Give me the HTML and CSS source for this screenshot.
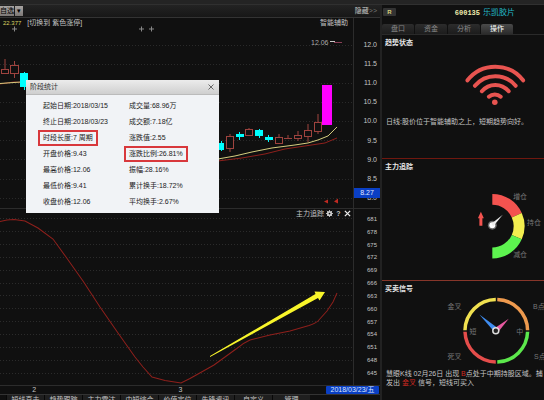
FILE: index.html
```
<!DOCTYPE html>
<html lang="zh-CN">
<head>
    <meta charset="UTF-8">
    <meta name="viewport" content="width=device-width, initial-scale=1.0">
    <title>乐凯胶片 600135</title>
    <link rel="stylesheet" href="styles.css">
</head>
<body>

<div class="topbar"></div>
<div class="main">
    <div class="chart-area">
        <div class="toolbar">
            <button class="tool">自选</button>
            <button class="tool arrow" aria-label="更多">▾</button>
            <button class="hide-btn">隐藏<span>&gt;&gt;</span></button>
        </div>

        <!-- K line -->
        <div class="pane kline">
            <div class="plot">
                <div class="legend">
                    <span class="price">22.377</span>
                    <span>[切换到 紫色涨停]</span>
                    <span class="right">智能辅助</span>
                </div>
                <svg viewBox="0 18 353 190" preserveAspectRatio="none">
                    <g class="grid">
                        <path d="M0 45.5H353M0 64.5H353M0 83.5H353M0 102.5H353M0 121.5H353M0 140.5H353M0 159.5H353M0 179.5H353M0 198.5H353"/>
                    </g>
                    <g class="star">
                        <path d="M12 29h5M14.500 26.500v5M139 29h5M141.500 26.500v5M149 29h5M151.500 26.500v5"/>
                    </g>
                    <path class="ma-red" d="M0 84L14 82L28 83"/>
                    <path class="ma-yellow" d="M0 83.500L14 82.500L28 81.500"/>
                    <g class="up">
                        <path d="M5 59V69M14.500 61V65M14.500 74V78"/>
                        <rect x="1.500" y="69.500" width="7" height="4"/>
                        <rect x="10.500" y="65.500" width="8" height="8"/>
                        <path d="M230 134V136M230 149V152M249 128V130M279 134V138M288 135V138M284 138.500H292M298 131V135M298 139V141M308 124V130M308 137V142M318 114V122M318 132V134"/>
                        <rect x="226.500" y="136.500" width="7" height="12"/>
                        <rect x="245.500" y="129.500" width="7" height="6"/>
                        <rect x="275.500" y="137.500" width="7" height="6"/>
                        <rect x="294.500" y="135.500" width="7" height="3"/>
                        <rect x="304.500" y="130.500" width="7" height="6"/>
                        <rect x="314.500" y="122.500" width="7" height="9"/>
                    </g>
                    <g class="down">
                        <path d="M24.500 72V90M221.500 141V151M239.500 132V140M259.500 129V138M268.500 135V142"/>
                        <rect x="20" y="73" width="8" height="14"/>
                        <rect x="216" y="143" width="8" height="7"/>
                        <rect x="236" y="134" width="8" height="3"/>
                        <rect x="255" y="130" width="8" height="6"/>
                        <rect x="265" y="137" width="8" height="3"/>
                    </g>
                    <path class="ma-yellow" d="M218 159L235 156L252 152L272 148L295 145L308 143L318 140L328 136L337 127"/>
                    <path class="ma-red" d="M218 161L242 158L265 154L285 149L305 146L325 143L337 138"/>
                    <rect class="limit" x="322" y="85" width="10" height="40"/>
                    <text class="high" x="311" y="45">12.06</text>
                    <path class="lead" d="M330 41.500h5"/>
                    <path class="lead-red" d="M334 42.500h8"/>
                    <path class="signal" d="M324 201.500l4-2v4zM334 201.500l4-3v5z"/>
                </svg>
            </div>
            <div class="axis price-axis">
                <span>12.0</span><span>11.5</span><span>11.0</span><span>10.5</span><span>10.0</span><span>9.5</span><span>9.0</span><span>8.5</span><span>8.0</span>
                <b class="cursor-price">8.27</b>
            </div>
        </div>

        <!-- Indicator -->
        <div class="pane indicator">
            <div class="plot">
                <div class="legend">
                    <span class="right">主力追踪</span>
                    <button class="mini" aria-label="设置">
                        <svg viewBox="0 0 8 8"><circle cx="4" cy="4" r="2" fill="none" stroke="#ccc" stroke-width="2"/><path d="M4 0V2M4 6V8M0 4H2M6 4H8M1 1L3 3M5 5L7 7M7 1L5 3M3 5L1 7" stroke="#ccc"/></svg>
                    </button>
                    <button class="mini">?</button>
                    <button class="mini" aria-label="关闭">
                        <svg viewBox="0 0 8 8"><path d="M1 1L7 7M7 1L1 7" stroke="#eee" stroke-width="1.500"/></svg>
                    </button>
                </div>
                <svg viewBox="0 209 353 176" preserveAspectRatio="none">
                    <g class="grid">
                        <path d="M0 218.500H353M0 231.500H353M0 244.500H353M0 257.500H353M0 270.500H353M0 283.500H353M0 295.500H353M0 308.500H353M0 321.500H353M0 334.500H353M0 347.500H353M0 360.500H353M0 373.500H353"/>
                    </g>
                    <path class="trend" d="M0 221.500L7 220L14 219.500L25 221L38 228L53 239L66 257L83 281L100 307L118 333L135 357L143 367L152 377L165 380.500L181 383L190 378.500L214 365L236 349Q243 343 250 340L270 335L290 331L309 325.500Q316 323 318 321L327 311L333 302L337 293"/>
                    <path class="pointer" d="M210 356L315.500 294L314.500 291.500L325 292L319.500 300.500L318 298L210 357z"/>
                </svg>
            </div>
            <div class="axis level-axis">
                <span>681</span><span>678</span><span>675</span><span>672</span><span>669</span><span>666</span><span>663</span><span>660</span><span>657</span><span>654</span><span>651</span><span>648</span><span>645</span>
            </div>
        </div>

        <div class="dates">
            <span>2</span>
            <span>3</span>
            <b>2018/03/23/五</b>
        </div>
        <div class="bottom-tabs">
            <button>短线直击</button><button>趋势跟踪</button><button>主力雷达</button><button>中短综合</button><button>价值定位</button><button>先锋资讯</button><button>自定义</button><button>管理</button>
        </div>
    </div>

    <div class="sidebar">
        <div class="stock">
            <span class="badge">R</span>
            <span class="code">600135</span>
            <span class="name">乐凯胶片</span>
        </div>
        <div class="tabs">
            <button>盘口</button><button>资金</button><button>分析</button><button class="active">操作</button>
        </div>

        <div class="section state">
            <h3>趋势状态</h3>
            <svg viewBox="381 51 163 59">
                <g fill="none" stroke="#e85450" stroke-width="4" stroke-linecap="round">
                    <path d="M467 79.500A35.500 35.500 0 0 1 523 79.500"/>
                    <path d="M474.500 85A26.500 26.500 0 0 1 515.500 85"/>
                    <path d="M481.500 90.500A17.500 17.500 0 0 1 508.500 90.500"/>
                    <path d="M488.500 96A9 9 0 0 1 500.500 96"/>
                </g>
                <circle cx="494.500" cy="101.500" r="2.800" fill="#e85450"/>
            </svg>
            <p>日线:股价位于智能辅助之上，短期趋势向好。</p>
        </div>

        <div class="section track">
            <h3>主力追踪</h3>
            <svg viewBox="381 174 163 102">
                <g fill="none" stroke-width="11">
                    <path d="M492 198.500A27 27 0 0 1 516.600 214.500" stroke="#f4534f"/>
                    <path d="M516.600 214.500A27 27 0 0 1 516.600 236.500" stroke="#f3ee4f"/>
                    <path d="M516.600 236.500A27 27 0 0 1 492 252.500" stroke="#5df34f"/>
                </g>
                <path d="M480.500 211L483.500 217.500H482V225H479V217.500H477.500z" fill="#f4534f"/>
                <circle cx="492" cy="224.500" r="4.500" fill="#666"/>
                <circle cx="492" cy="224.500" r="3" fill="#fff"/>
                <path d="M491 223L502.500 214L493 225.500z" fill="#eee"/>
                <g class="dial-text">
                    <text x="513" y="198">增仓</text>
                    <text x="527" y="224">持仓</text>
                    <text x="513" y="257">减仓</text>
                </g>
            </svg>
        </div>

        <div class="section trade">
            <h3>买卖信号</h3>
            <svg viewBox="381 296 163 69">
                <g fill="none" stroke-width="3.500">
                    <path d="M464.500 329.500A31.500 31.500 0 0 1 495.500 298.500" stroke="#f0e050"/>
                    <path d="M497 298.500A31.500 31.500 0 0 1 527.500 329.500" stroke="#ee9a4e"/>
                    <path d="M527.500 331A31.500 31.500 0 0 1 497 361.500" stroke="#5ce84c"/>
                    <path d="M495.500 361.500A31.500 31.500 0 0 1 464.500 331" stroke="#e54d4b"/>
                </g>
                <g class="dial-text">
                    <text x="447" y="308">金叉</text>
                    <text x="533" y="308">B点</text>
                    <text x="447" y="358">死叉</text>
                    <text x="534" y="358">S点</text>
                    <text x="469" y="333">短</text>
                    <text x="516" y="333">中</text>
                </g>
                <path d="M479 313.500L497 327L493.500 330.500z" fill="#3f8df0"/>
                <path d="M508.500 318L498.500 330.500L495 327z" fill="#e858a0"/>
                <circle cx="495.500" cy="330" r="3" fill="#222" stroke="#ddd" stroke-width="1.500"/>
            </svg>
            <p>慧眼K线 02月26日 出现 <em>B</em>点处于中期持股区域。捕<br>发出 <em>金叉</em> 信号，短线可买入</p>
        </div>
    </div>
</div>

<div class="dialog" role="dialog" aria-labelledby="dialog-title">
    <div class="dialog-head">
        <span id="dialog-title">阶段统计</span>
        <button aria-label="关闭">
            <svg viewBox="0 0 8 8"><path d="M1.500 1.500L6.500 6.500M6.500 1.500L1.500 6.500" stroke="#666"/></svg>
        </button>
    </div>
    <div class="stats">
        <span>起始日期:2018/03/15</span><span>成交量:68.96万</span>
        <span>终止日期:2018/03/23</span><span>成交额:7.18亿</span>
        <span class="mark">时段长度:7 周期</span><span>涨跌值:2.55</span>
        <span>开盘价格:9.43</span><span class="mark">涨跌比例:26.81%</span>
        <span>最高价格:12.06</span><span>振幅:28.16%</span>
        <span>最低价格:9.41</span><span>累计换手:18.72%</span>
        <span>收盘价格:12.06</span><span>平均换手:2.67%</span>
    </div>
</div>

</body>
</html>
```
FILE: styles.css
```
* {
    box-sizing: border-box;
}

body {
    margin: 0;
    height: 100vh;
    display: flex;
    flex-direction: column;
    overflow: hidden;
    position: relative;
    background: #101010;
    color: #c4c4c4;
    font-family: "Liberation Sans", "Noto Sans CJK SC", sans-serif;
    font-size: 7px;
    line-height: 10px;
    white-space: nowrap;
}

button {
    margin: 0;
    padding: 0;
    border: 0;
    background: none;
    color: inherit;
    font: inherit;
    cursor: pointer;
}

svg {
    display: block;
}

.topbar {
    height: 5px;
    flex: none;
    background: #242424;
    border-bottom: 1px solid #303030;
}

.main {
    flex: 1;
    min-height: 0;
    display: flex;
}

.chart-area {
    flex: 1;
    min-width: 0;
    display: flex;
    flex-direction: column;
}

/* toolbar */
.toolbar {
    height: 13px;
    flex: none;
    display: flex;
    align-items: center;
    gap: 1px;
    padding-right: 3px;
    background: linear-gradient(#232323, #171717);
    border-bottom: 1px solid #333;
}

.tool {
    height: 10px;
    width: 14px;
    background: linear-gradient(#a8a4a2, #7c7876);
    color: #000;
}

.tool.arrow {
    width: 8px;
}

.hide-btn {
    margin-left: auto;
}

.hide-btn span {
    color: #777;
}

/* panes */
.pane {
    display: flex;
    min-height: 0;
    border-bottom: 1px solid #2c2c2c;
}

.kline {
    flex: 191 1 0;
}

.indicator {
    flex: 177 1 0;
}

.plot {
    flex: 1;
    min-width: 0;
    position: relative;
}

.plot > svg {
    width: 100%;
    height: 100%;
}

.legend {
    position: absolute;
    top: 0;
    left: 0;
    right: 0;
    display: flex;
    align-items: center;
    gap: 6px;
    padding: 0 5px 0 3px;
}

.legend .right {
    margin-left: auto;
}

.indicator .legend {
    gap: 2px;
    padding: 0 2px;
}

.price {
    color: #d8d060;
    font-size: 6px;
}

.mini {
    width: 7px;
    font-weight: bold;
    line-height: 8px;
}

.axis {
    width: 27px;
    flex: none;
    position: relative;
    display: flex;
    flex-direction: column;
    justify-content: space-between;
    padding-right: 3px;
    border-left: 1px solid #2c2c2c;
    text-align: right;
}

.price-axis {
    padding-top: 22px;
    padding-bottom: 5px;
}

.level-axis {
    padding-top: 5px;
    padding-bottom: 7px;
    font-size: 6px;
}

.cursor-price {
    position: absolute;
    left: 0;
    right: 0;
    bottom: 10px;
    background: #0a3fc4;
    color: #e0e8ff;
    font-weight: normal;
    text-align: center;
}

.grid path {
    stroke: #2b2b2b;
    stroke-dasharray: 1 2;
}

.star path {
    stroke: #8a8a8a;
}

.up {
    fill: #101010;
    stroke: #a0443f;
}

.down {
    fill: #0ff;
    stroke: none;
}

.down path {
    stroke: #0ff;
}

.limit {
    fill: #f0f;
}

.ma-yellow,
.ma-red,
.trend {
    fill: none;
    stroke: #d6cf80;
}

.ma-red,
.trend {
    stroke: #8f201c;
}

.high {
    fill: #aaa;
    font-size: 7px;
}

.lead {
    stroke: #ccc;
}

.lead-red {
    stroke: #8c4058;
}

.signal {
    fill: #c22a22;
}

.pointer {
    fill: #f8f52a;
}

.dates {
    height: 8px;
    flex: none;
    display: grid;
    grid-template-columns: 18% 59% 1fr;
    line-height: 8px;
}

.dates span {
    text-align: center;
}

.dates b {
    justify-self: end;
    width: 53px;
    margin-right: 1px;
    background: #0a3fc4;
    border-radius: 1px;
    color: #dce6ff;
    font-weight: normal;
    text-align: center;
}

.bottom-tabs {
    height: 6px;
    flex: none;
    display: flex;
    overflow: hidden;
    padding-left: 6px;
    border-top: 1px solid #333;
}

.bottom-tabs button {
    flex: 0 1 38px;
    height: 10px;
    background: #1f1f1f;
    border-left: 1px solid #080808;
    line-height: 10px;
}

/* sidebar */
.sidebar {
    width: 164px;
    flex: none;
    display: flex;
    flex-direction: column;
    overflow: hidden;
    border-left: 2px solid #222;
}

.stock {
    height: 19px;
    flex: none;
    display: flex;
    align-items: flex-start;
    padding: 3px 29px 0 1px;
}

.badge {
    width: 13px;
    height: 8px;
    border-radius: 1px;
    background: #333;
    color: #d8cf7a;
    font-size: 6px;
    font-weight: bold;
    line-height: 8px;
    text-align: center;
}

.code {
    margin-left: auto;
    color: #f2eeb0;
    font-family: "Liberation Mono", monospace;
    font-weight: bold;
}

.name {
    margin-left: 3px;
    color: #22b8c8;
    font-size: 8px;
}

.tabs {
    height: 11px;
    flex: none;
    display: flex;
    gap: 1px;
    border-bottom: 1px solid #2a2a2a;
}

.tabs button {
    width: 32px;
    border-radius: 2px 2px 0 0;
    background: linear-gradient(#2c2c2c, #1c1c1c);
    color: #888;
}

.tabs .active {
    background: linear-gradient(#4a4a4a, #2b2b2b);
    color: #fff;
}

.section {
    padding-top: 3px;
    border-bottom: 1px solid #70180f;
}

.section h3 {
    margin: 0;
    padding-left: 3px;
    color: #e6e6e6;
    font-size: 7px;
    font-weight: bold;
    line-height: 10px;
}

.section p {
    margin: 0;
    padding-left: 4px;
    line-height: 9px;
}

.section svg {
    width: 100%;
    margin: 3px 0;
}

.state {
    flex: 123 0 0;
}

.state svg {
    margin: 4px 0 6px;
}

.track {
    flex: 122 0 0;
    border-bottom-color: #87362a;
}

.trade {
    flex: 119 0 0;
    border-bottom: 0;
}

.trade em {
    color: #d02a22;
    font-style: normal;
}

.dial-text {
    fill: #777;
    font-size: 7px;
}

/* statistics dialog */
.dialog {
    position: absolute;
    top: 80px;
    left: 26px;
    width: 193px;
    background: #f1f3f6;
    color: #222;
}

.dialog-head {
    height: 15px;
    display: flex;
    align-items: center;
    justify-content: space-between;
    padding: 0 4px;
    background: linear-gradient(#ececec, #cfcfcf);
    border-bottom: 1px solid #bbb;
    color: #333;
}

.dialog-head button {
    width: 8px;
    height: 8px;
}

.stats {
    display: grid;
    grid-template-columns: 86px 1fr;
    justify-items: start;
    padding: 3px 0 3px 12px;
}

.stats span {
    padding: 1px 3px;
    border: 2px solid transparent;
}

.stats .mark {
    border-color: #d8383c;
}
```
